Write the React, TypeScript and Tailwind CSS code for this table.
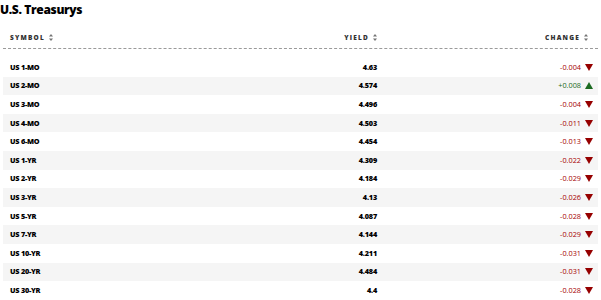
const rows = [
  { symbol: "US 1-MO", yld: "4.63", change: "-0.004" },
  { symbol: "US 2-MO", yld: "4.574", change: "+0.008" },
  { symbol: "US 3-MO", yld: "4.496", change: "-0.004" },
  { symbol: "US 4-MO", yld: "4.503", change: "-0.011" },
  { symbol: "US 6-MO", yld: "4.454", change: "-0.013" },
  { symbol: "US 1-YR", yld: "4.309", change: "-0.022" },
  { symbol: "US 2-YR", yld: "4.184", change: "-0.029" },
  { symbol: "US 3-YR", yld: "4.13", change: "-0.026" },
  { symbol: "US 5-YR", yld: "4.087", change: "-0.028" },
  { symbol: "US 7-YR", yld: "4.144", change: "-0.029" },
  { symbol: "US 10-YR", yld: "4.211", change: "-0.031" },
  { symbol: "US 20-YR", yld: "4.484", change: "-0.031" },
  { symbol: "US 30-YR", yld: "4.4", change: "-0.028" },
];

function SortIcon() {
  return (
    <svg width="4" height="7" viewBox="0 0 4 7" className="ml-[4px]">
      <path d="M2 0 L4 2.6 L0 2.6 Z" fill="#747474" />
      <path d="M0 4.4 L4 4.4 L2 7 Z" fill="#747474" />
    </svg>
  );
}

function Arrow({ up }: { up: boolean }) {
  return up ? (
    <svg width="8" height="7" viewBox="0 0 8 7">
      <path d="M4 0 L8 7 L0 7 Z" fill="#1c6b22" />
    </svg>
  ) : (
    <svg width="8" height="7" viewBox="0 0 8 7">
      <path d="M0 0 L8 0 L4 7 Z" fill="#960000" />
    </svg>
  );
}

export default function App() {
  return (
    <div className="w-[601px] h-[300px] bg-white overflow-hidden font-['Open_Sans','Liberation_Sans',sans-serif] text-black">
      <h1 className="text-[12px] font-extrabold leading-none pt-[4px] tracking-[-0.35px]">U.S. Treasurys</h1>

      <div className="mx-[3px] mt-[11px]">
        <div className="flex items-center h-[22px] pl-[7px] pr-[10px] text-[6.5px] font-extrabold tracking-[1.2px] text-[#333] border-b border-dashed border-[#9a9a9a]">
          <div className="flex-1 flex items-center">SYMBOL<SortIcon /></div>
          <div className="w-[120px] flex items-center justify-end">YIELD<SortIcon /></div>
          <div className="w-[211px] flex items-center justify-end">CHANGE<SortIcon /></div>
        </div>

        <div className="mt-[9px]">
          {rows.map((r, i) => {
            const up = r.change.startsWith("+");
            return (
              <div
                key={r.symbol}
                className={`flex items-center h-[18.6px] pl-[7px] pr-[5px] text-[7.3px] ${i % 2 === 1 ? "bg-[#f5f5f5]" : ""}`}
              >
                <div className="flex-1 font-extrabold tracking-[-0.25px]">{r.symbol}</div>
                <div className="w-[120px] text-right font-extrabold pr-[2px] tracking-[-0.2px]">{r.yld}</div>
                <div className="w-[214px] flex items-center justify-end gap-[4px]">
                  <span className={up ? "text-[#1c6b22]" : "text-[#a50000]"}>{r.change}</span>
                  <Arrow up={up} />
                </div>
              </div>
            );
          })}
        </div>
      </div>
    </div>
  );
}
